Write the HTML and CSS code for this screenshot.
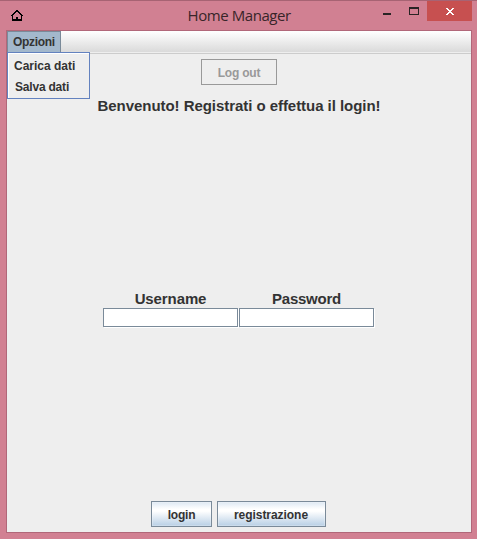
FILE: index.html
```
<!DOCTYPE html>
<html lang="it">
<head>
<meta charset="utf-8">
<title>Home Manager</title>
<link rel="stylesheet" href="styles.css">
</head>
<body>
<div class="window">
  <header class="titlebar">
    <svg class="home" width="12" height="11" viewBox="0 0 12 11" shape-rendering="crispEdges"><path d="M5 0h2v1h1v1h1v1h1v1h1v1h1v1h-1v5H1V6H0V5h1V4h1V3h1V2h1V1h1zM5 2v1H4v1H3v1H2v4h3V7h2v2h3V5H9V4H8V3H7V2z" fill="#000" fill-rule="evenodd"/></svg>
    <h1 class="title"><span>Home Manager</span></h1>
    <div class="controls">
      <svg width="44" height="20" viewBox="0 0 44 20" shape-rendering="crispEdges"><path d="M0 12h8v2H0zM26 6h10v8H26zM27 8v5h8V8z" fill="#292424" fill-rule="evenodd"/></svg>
      <div class="close"><svg width="8" height="7" viewBox="0 0 8 7" shape-rendering="crispEdges"><path d="M0 0h2v1h1v1h2V1h1V0h2v1H7v1H6v1H5v1h1v1h1v1h1v1H6V6H5V5H3v1H2v1H0V6h1V5h1V4h1V3H2V2H1V1H0z" fill="#fff"/></svg></div>
    </div>
  </header>
  <main class="content">
    <nav class="menubar">
      <div class="menu"><span class="menu-label">Opzioni</span>
        <div class="popup"><div class="item carica">Carica dati</div><div class="item salva">Salva dati</div></div>
      </div>
    </nav>
    <button class="button logout" disabled><span>Log out</span></button>
    <h2 class="welcome"><span>Benvenuto! Registrati o effettua il login!</span></h2>
    <form class="fields">
      <label class="field"><span class="user">Username</span><input type="text"></label>
      <label class="field"><span class="pass">Password</span><input type="password"></label>
    </form>
    <footer class="actions">
      <button class="button login"><span>login</span></button>
      <button class="button register"><span>registrazione</span></button>
    </footer>
  </main>
</div>
</body>
</html>
```
FILE: styles.css
```
* { box-sizing: border-box; }
body { margin: 0; font: bold 12px/15px "Liberation Sans", Arial, sans-serif; color: #333; }
.window { width: 477px; height: 539px; background: #d18092; border-top: 1px solid #a76373; padding: 0 5px 6px 6px; display: flex; flex-direction: column; }
.titlebar { height: 29px; display: grid; grid-template-columns: 105px 1fr 89px; flex: none; }
.home { margin: 9px 0 0 5px; }
.title { margin: 0 0 0 76.5px; font: 15px/29px "Open Sans", "Noto Sans", sans-serif; letter-spacing: -.42px; color: #382529; white-space: nowrap; width: 110px; }
.controls { display: flex; }
.controls > svg { flex: none; }
.close { width: 45px; height: 20px; background: #c75050; flex: none; padding: 7px 0 0 19px; }
.close svg { display: block; }
.content { flex: 1; border: 1px solid #b16779; background: #eee; display: flex; flex-direction: column; align-items: center; }
.menubar { width: 100%; height: 23px; background: linear-gradient(#fff, #dadada 21px, #eee 21px, #eee 22px, #ccc 22px); flex: none; }
.menu { position: relative; width: 54px; height: 21px; background: #a3b8cc; border: 1px solid #7a8a99; border-bottom: 0; padding: 3px 0 0 5px; }
.menu-label { letter-spacing: -.3px; }
.popup { position: absolute; left: -1px; top: 20px; width: 83px; height: 47px; background: #eee; border: 1px solid #6382bf; padding: 6px 0 0 6px; box-shadow: inset 1px 1px #fff; }
.item { height: 21px; }
.salva { padding-left: 1px; letter-spacing: -.2px; }
.button { font: inherit; color: #333; height: 26px; border: 1px solid #7a8a99; border-radius: 0; padding: 1px 0 0; text-align: center; background: linear-gradient(#dde8f3, #fff 30%, #fff 38%, #b8cfe5); box-shadow: inset 0 0 0 1px #ffffff40; }
.logout { width: 76px; margin-top: 5px; padding-top: 2px; letter-spacing: -.2px; color: #999; border-color: #999; background: #eee; box-shadow: none; flex: none; }
.welcome { margin: 12px 0 0; font-size: 15px; line-height: 18px; letter-spacing: -.05px; white-space: nowrap; }
.fields { margin: 175px 1px 0 0; display: flex; gap: 1px; }
.field { width: 135px; text-align: center; font-size: 15px; line-height: 18px; letter-spacing: -.1px; }
.field span { display: block; }
.pass { letter-spacing: -.25px; }
.field input { display: block; width: 135px; height: 19px; border: 1px solid #7a8a99; border-radius: 0; box-shadow: 1px 1px #fff; background: #fff; padding: 0; margin: 0; }
.actions { margin: auto 2px 5px 0; display: flex; gap: 5px; }
.login { width: 61px; padding: 2px 0 0 1px; letter-spacing: -.2px; }
.register { width: 109px; padding-top: 2px; letter-spacing: -.05px; }
```
